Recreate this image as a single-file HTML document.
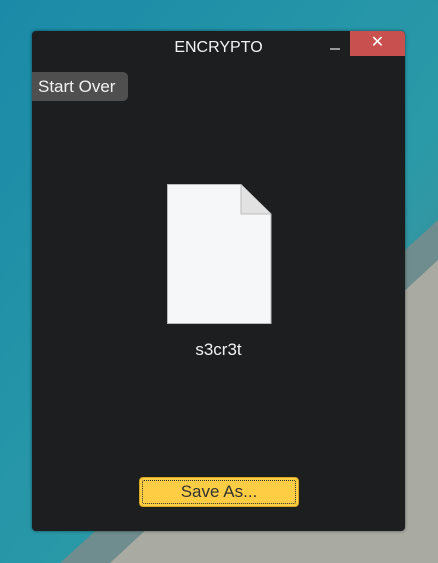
<!DOCTYPE html>
<html><head><style>
body{margin:0;width:438px;height:563px;overflow:hidden;position:relative;font-family:"Liberation Sans",sans-serif;background:#1f8ea6}
.win{position:absolute;left:32px;top:31px;width:373px;height:500px;background:#1d1e1f;border-radius:4px;box-shadow:0 0 3px rgba(0,0,0,.5)}
.title{position:absolute;left:0;right:0;top:8px;text-align:center;color:#f2f2f2;font-size:16px}
.close{position:absolute;right:0;top:0;width:55px;height:25px;background:#c8504f;border-top-right-radius:4px;color:#fff;text-align:center;font-size:16px;line-height:24px}
.min{position:absolute;left:298px;top:17px;width:10px;height:2px;background:#999}
.so{position:absolute;left:0;top:41px;width:96px;height:29px;background:#4f4f4f;border-radius:0 5px 5px 0;color:#f2f2f2;font-size:17px;line-height:29px;padding-left:6px;box-sizing:border-box}
.name{position:absolute;left:0;right:0;top:309px;text-align:center;color:#f2f2f2;font-size:17px}
.save{position:absolute;left:107px;top:446px;width:160px;height:30px;background:#fecd44;border-radius:4px;box-sizing:border-box;border:1px solid #d8a520;color:#333;font-size:17px;text-align:center;line-height:27px}
.save::after{content:"";position:absolute;inset:2px;border:1px dotted #333;border-radius:2px}
</style></head><body>
<svg width="438" height="563" style="position:absolute;left:0;top:0">
<defs><linearGradient id="w" x1="0" y1="0" x2="1" y2="1"><stop offset="0" stop-color="#1a8aa8"/><stop offset=".6" stop-color="#2a9aa8"/><stop offset="1" stop-color="#4a8a90"/></linearGradient></defs>
<rect width="438" height="563" fill="url(#w)"/>
<polygon points="438,220 438,563 60,563" fill="#6f8c8e"/>
<polygon points="438,260 438,563 110,563" fill="#a9aba3"/>
</svg>
<div class="win">
<div class="title">ENCRYPTO</div>
<div class="min"></div>
<div class="close">✕</div>
<div class="so">Start Over</div>
<svg style="position:absolute;left:135px;top:153px" width="105" height="140">
<path d="M0.5 0.5H74L104 30V139.5H0.5Z" fill="#f6f7f8" stroke="#bbb"/>
<path d="M74 0.5V30H104" fill="#e2e2e2" stroke="#bbb"/>
</svg>
<div class="name">s3cr3t</div>
<div class="save">Save As...</div>
</div>
</body></html>
